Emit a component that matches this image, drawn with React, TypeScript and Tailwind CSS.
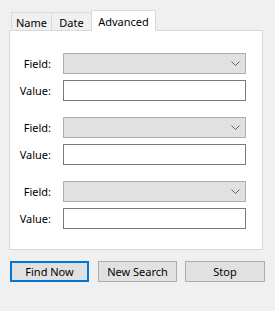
import React from 'react';

const font = { fontFamily: '"Noto Sans", "Segoe UI", sans-serif' };

const Chevron: React.FC = () => (
    <svg width="9" height="5" viewBox="0 0 9 5" className="mr-[5px]">
        <path d="M0.5 0.5 L4.5 4.5 L8.5 0.5" fill="none" stroke="#606060" strokeWidth="1" />
    </svg>
);

const FieldGroup: React.FC = () => (
    <div className="flex flex-col gap-[6px]">
        <div className="flex items-center">
            <span className="w-[41px] text-right text-black mr-[12px]">Field:</span>
            <div className="w-[183px] h-[21px] bg-[#e1e1e1] border border-[#adadad] flex items-center justify-end">
                <Chevron />
            </div>
        </div>
        <div className="flex items-center">
            <span className="w-[41px] text-right text-black mr-[12px]">Value:</span>
            <div className="w-[183px] h-[21px] bg-white border border-[#7a7a7a]" />
        </div>
    </div>
);

const App: React.FC = () => {
    const tabs = ['Name', 'Date'];
    return (
        <div className="w-[275px] h-[311px] bg-[#f0f0f0] text-[11px] leading-none" style={font}>
            <div className="flex items-end h-[31px] pl-[11px] pt-[10px]">
                {tabs.map(t => (
                    <div key={t} className="w-[41px] h-[19px] border border-b-0 border-[#d9d9d9] -ml-px first:ml-0 flex items-center justify-center text-black">
                        {t}
                    </div>
                ))}
                <div className="w-[65px] h-[21px] -ml-px bg-white border border-b-0 border-[#d9d9d9] flex items-center justify-center text-black relative z-10">
                    Advanced
                </div>
            </div>
            <div className="ml-[9px] -mt-px w-[254px] h-[220px] bg-white border border-[#d9d9d9] pt-[22px] flex flex-col gap-[16px]">
                <FieldGroup />
                <FieldGroup />
                <FieldGroup />
            </div>
            <div className="flex mt-[11px] pl-[10px]">
                <button className="w-[79px] h-[21px] bg-[#e1e1e1] border-2 border-[#0078d7] text-black">Find Now</button>
                <button className="w-[79px] h-[21px] ml-[9px] bg-[#e1e1e1] border border-[#adadad] text-black">New Search</button>
                <button className="w-[80px] h-[21px] ml-[8px] bg-[#e1e1e1] border border-[#adadad] text-black">Stop</button>
            </div>
        </div>
    );
};

export default App;
